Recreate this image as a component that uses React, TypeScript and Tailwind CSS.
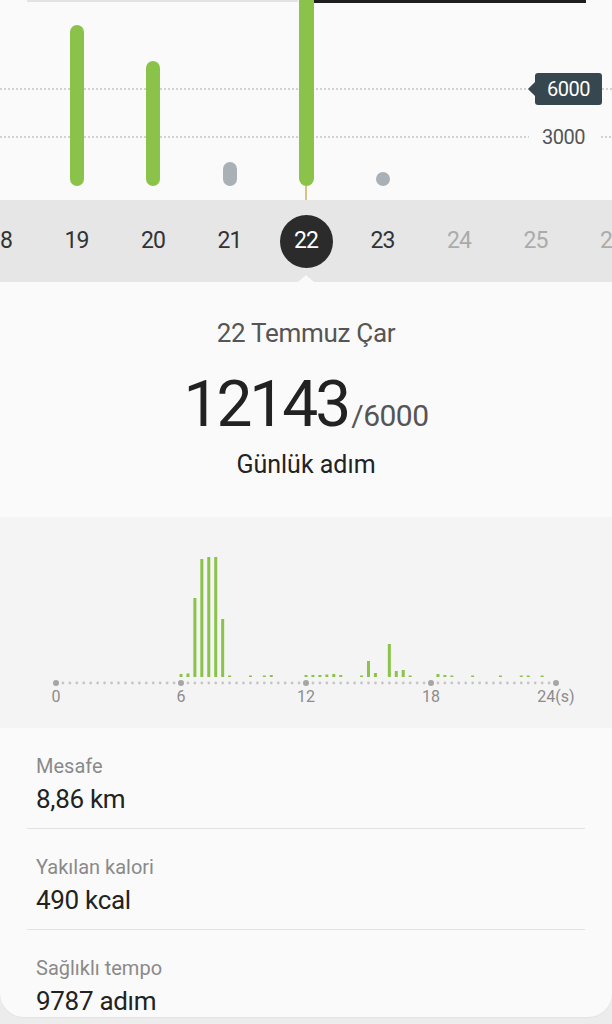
import React from 'react';

const days = [
  { d: 18, bar: 0, color: '', muted: false },
  { d: 19, bar: 161, color: 'green', muted: false },
  { d: 20, bar: 125, color: 'green', muted: false },
  { d: 21, bar: 24, color: 'gray', muted: false },
  { d: 22, bar: 200, color: 'green', muted: false },
  { d: 23, bar: 14, color: 'gray', muted: false },
  { d: 24, bar: 0, color: '', muted: true },
  { d: 25, bar: 0, color: '', muted: true },
  { d: 26, bar: 0, color: '', muted: true },
];

// 20 dakikalık dilimler: [dilim, yükseklik]
const hourly: [number, number][] = [
  [18, 3], [19, 3.5], [20, 79], [21, 118], [22, 120], [23, 124], [24, 58], [25, 1.5],
  [28, 1.5], [30, 1.5], [31, 2], [36, 2], [37, 2], [38, 2], [39, 2.5], [40, 3], [41, 2],
  [44, 1.5], [45, 16], [46, 4], [48, 33], [49, 6], [50, 7], [51, 1.5],
  [55, 3], [56, 2], [57, 1.5], [60, 1.5], [64, 1.5], [67, 1.5], [68, 1.5], [70, 1.5],
];

const hourLabels = ['0', '6', '12', '18', '24(s)'];

const stats = [
  { label: 'Mesafe', value: '8,86 km' },
  { label: 'Yakılan kalori', value: '490 kcal' },
  { label: 'Sağlıklı tempo', value: '9787 adım' },
];

const step = 500 / 72;

function DailyBars() {
  return (
    <div className="relative h-[200px] overflow-hidden bg-[#fafafa]">
      {/* tab indicator */}
      <div className="absolute left-[27px] top-0 h-[2px] w-[271px] bg-[#e3e3e3]" />
      <div className="absolute left-[306px] top-0 h-[3px] w-[280px] bg-[#1e1e1e]" />

      {/* goal lines */}
      <div className="absolute left-0 top-[88px] h-[2px] w-[527px] bg-[repeating-linear-gradient(to_right,#d2d2d2_0_2px,transparent_2px_4px)]" />
      <div className="absolute left-[602px] top-[88px] h-[2px] w-[10px] bg-[repeating-linear-gradient(to_right,#d2d2d2_0_2px,transparent_2px_4px)]" />
      <div className="absolute left-0 top-[136px] h-[2px] w-[529px] bg-[repeating-linear-gradient(to_right,#d2d2d2_0_2px,transparent_2px_4px)]" />
      <div className="absolute left-[601px] top-[136px] h-[2px] w-[11px] bg-[repeating-linear-gradient(to_right,#d2d2d2_0_2px,transparent_2px_4px)]" />

      <div className="relative -ml-[38.25px] flex h-full w-[688.5px]">
        {days.map((day) => (
          <div key={day.d} className="flex w-[76.5px] shrink-0 flex-col items-center justify-end">
            {day.bar > 0 && day.d === 22 && (
              <div className="h-[186px] w-[15px] rounded-b-full bg-[#8bc34a]" />
            )}
            {day.bar > 0 && day.d !== 22 && (
              <div
                className={
                  day.color === 'green'
                    ? 'w-[14px] rounded-full bg-[#8bc34a]'
                    : 'w-[14px] rounded-full bg-[#a9b1b7]'
                }
                style={{ height: day.bar }}
              />
            )}
            <div className="flex h-[14px] w-full justify-center">
              {day.d === 22 && <div className="h-full w-[2px] bg-[#d7c47e]" />}
            </div>
          </div>
        ))}
      </div>

      <div className="absolute left-[535px] top-[73px] flex h-[32px] w-[67px] items-center justify-center rounded-[3px] bg-[#37474f] text-[20px] tracking-[-0.5px] text-white">
        <div className="absolute -left-[5px] top-[11px] h-[10px] w-[10px] rotate-45 bg-[#37474f]" />
        <span className="relative">6000</span>
      </div>
      <div className="absolute left-[542px] top-[125px] text-[20px] leading-[24px] tracking-[-0.5px] text-[#555555]">3000</div>
    </div>
  );
}

function DateStrip() {
  return (
    <div className="relative h-[82px] overflow-hidden bg-[#e6e6e6]">
      <div className="-ml-[38.25px] flex h-full w-[688.5px] items-center">
        {days.map((day) => (
          <div key={day.d} className="flex w-[76.5px] shrink-0 items-center justify-center">
            {day.d === 22 ? (
              <div className="flex h-[53px] w-[53px] items-center justify-center rounded-full bg-[#2b2b2b] text-[23px] tracking-[-1px] text-white">
                22
              </div>
            ) : (
              <span className={day.muted ? 'text-[23px] tracking-[-1px] text-[#ababab]' : 'text-[23px] tracking-[-1px] text-[#333333]'}>
                {day.d}
              </span>
            )}
          </div>
        ))}
      </div>
      <div className="absolute bottom-0 left-[298px] h-0 w-0 border-x-[8px] border-b-[7px] border-x-transparent border-b-[#fafafa]" />
    </div>
  );
}

function HourlyChart() {
  const dots = Array.from({ length: 73 }, (_, i) => i);
  return (
    <div className="flex h-[211px] flex-col overflow-hidden bg-[#f4f4f4] pt-[40px]">
      <svg width="612" height="130" className="block">
        {hourly.map(([bin, h]) => (
          <rect key={bin} x={56 + bin * step - 1.5} y={120 - h} width="3" height={h} fill="#8bc34a" />
        ))}
        {dots.map((i) =>
          i % 18 === 0 ? (
            <circle key={i} cx={56 + i * step} cy={126} r={3} fill="#a6a6a6" />
          ) : (
            <circle key={i} cx={56 + i * step} cy={126} r={1.4} fill="#c6c6c6" />
          )
        )}
      </svg>
      <div className="-ml-[6.5px] flex text-[16px] leading-[20px] text-[#8c8c8c]">
        {hourLabels.map((l) => (
          <span key={l} className="w-[125px] shrink-0 text-center">
            {l}
          </span>
        ))}
      </div>
    </div>
  );
}

export default function App() {
  return (
    <div className="h-[1024px] w-[612px] overflow-hidden bg-[#ececec] font-['Roboto','Noto_Sans',sans-serif]">
      <div className="overflow-hidden rounded-b-[24px] bg-[#fafafa] shadow-[0_1px_2px_rgba(0,0,0,0.04)]">
        <DailyBars />
        <DateStrip />

        <div className="flex flex-col items-center bg-[#fafafa] pb-[37px] pt-[36px]">
          <div className="text-[26px] leading-[30px] tracking-[-0.3px] text-[#555555]">22 Temmuz Çar</div>
          <div className="mt-[25px] flex items-baseline leading-[64px]">
            <span className="text-[64px] tracking-[-3px] text-[#222222]">12143</span>
            <span className="ml-[3px] text-[30px] tracking-[-0.5px] text-[#555555]">/6000</span>
          </div>
          <div className="mt-[2px] text-[25px] leading-[30px] text-[#222222]">Günlük adım</div>
        </div>

        <HourlyChart />

        <div className="flex flex-col">
          {stats.map((s, i) => (
            <div key={s.label} className="flex flex-col">
              <div className={i < stats.length - 1 ? 'px-[36px] pb-[13px] pt-[26px]' : 'px-[36px] pt-[26px]'}>
                <div className="text-[20px] leading-[24px] text-[#8a8a8a]">{s.label}</div>
                <div className="mt-[5px] text-[26px] leading-[32px] tracking-[-0.3px] text-[#222222]">{s.value}</div>
              </div>
              {i < stats.length - 1 && <div className="mx-[27px] h-px bg-[#e3e3e3]" />}
            </div>
          ))}
        </div>
      </div>
    </div>
  );
}
